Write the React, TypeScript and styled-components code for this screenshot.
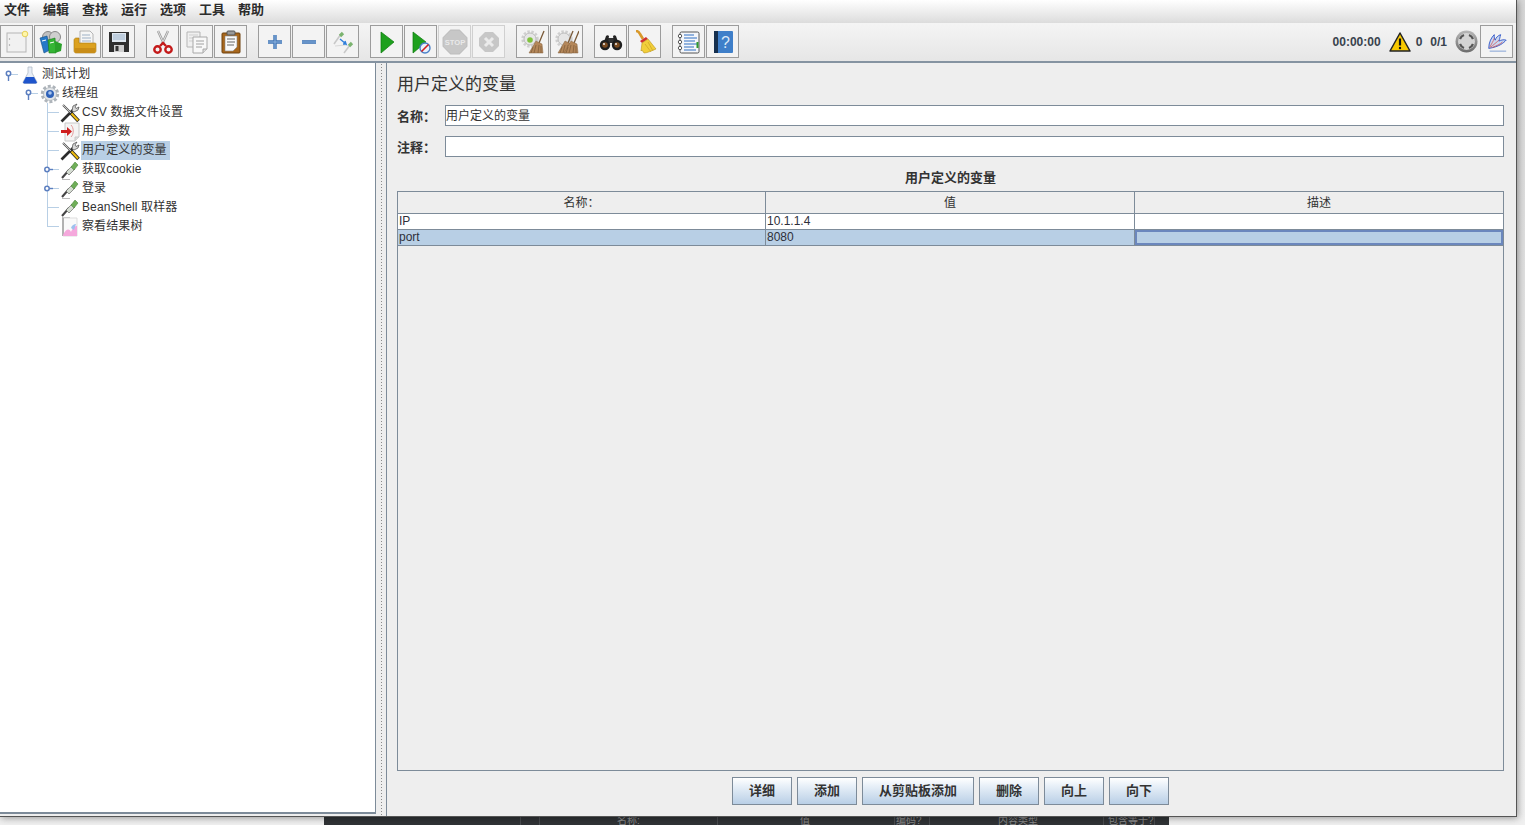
import React from "react";
import styled, { createGlobalStyle } from "styled-components";

const CJK = `"Liberation Sans", "Noto Sans CJK SC", sans-serif`;
const LINE = "#7d8b99";
const SEL = "#b8cfe5";

const Global = createGlobalStyle`
  html, body { margin: 0; padding: 0; background: #f1f1f1; overflow: hidden; }
  body { font-family: ${CJK}; font-size: 12px; color: #333; }
`;

const Page = styled.div`
  position: relative; width: 1525px; height: 825px; overflow: hidden;
  background: linear-gradient(#d8d8d8, #f0f0f0);
`;
const Window = styled.div`
  position: relative; z-index: 1;
  width: 1517px; height: 817px; box-sizing: border-box; display: flex; flex-direction: column;
  background: #eeeeee; border-right: 1px solid #555; border-bottom: 1px solid #555;
  box-shadow: 1px 1px 7px rgba(0,0,0,.38);
`;
const MenuBar = styled.div`
  height: 23px; flex: none; display: flex; align-items: flex-start; gap: 13px; padding: 0 0 0 4px;
  background: linear-gradient(#ffffff, #dcdcdc);
  border-bottom: 1px solid #f4f4f4;
`;
const MenuItem = styled.span`font-size: 13px; font-weight: 700; color: #2c2c2c; line-height: 19px;`;
const Toolbar = styled.div`
  height: 39px; flex: none; box-sizing: border-box; display: flex; align-items: flex-start; padding: 1px 3px 0 0;
  background: linear-gradient(#f4f4f4, #e6e6e6);
  border-bottom: 2px solid #8593a1;
`;
const ToolGroup = styled.div<{ $gap: number }>`display: flex; gap: 1px; margin-left: ${p => p.$gap}px;`;
const ToolButton = styled.div<{ $off?: boolean }>`
  width: 33px; height: 33px; box-sizing: border-box; display: flex; align-items: center; justify-content: center;
  background: #f3f3f3;
  border: 1px solid ${p => (p.$off ? "#d0d0d0" : "#9c9c9c")};
  & > svg { opacity: ${p => (p.$off ? 0.42 : 1)}; }
`;
const StatusArea = styled.div`
  margin-left: auto; height: 33px; display: flex; align-items: center;
  font-size: 12px; font-weight: 700; color: #39434d;
`;
const StatusText = styled.span<{ $left: number }>`margin-left: ${p => p.$left}px;`;
const StatusIcon = styled.span<{ $left: number; $right?: number }>`
  display: flex; margin-left: ${p => p.$left}px; margin-right: ${p => p.$right ?? 0}px;
`;
const Split = styled.div`flex: 1; min-height: 0; display: flex;`;
const TreePane = styled.div`
  width: 376px; flex: none; box-sizing: border-box; background: #fff; padding-top: 2px;
  margin-bottom: 2px;
  border-right: 1px solid ${LINE}; border-bottom: 2px solid ${LINE};
`;
const TreeRowBox = styled.div<{ $level: number }>`
  height: 19px; display: flex; align-items: center; padding-left: ${p => p.$level * 20}px;
`;
const Gutter = styled.svg`width: 20px; height: 19px; flex: none;`;
const TreeIcon = styled.span`width: 20px; height: 19px; flex: none; display: flex; align-items: center; justify-content: center;`;
const TreeLabel = styled.span<{ $sel?: boolean }>`
  margin-left: 1px; padding: 0 3px 0 1px; height: 19px; line-height: 19px; font-size: 12px;
  color: #333; letter-spacing: 0.1px; white-space: nowrap;
  background: ${p => (p.$sel ? SEL : "transparent")};
`;
const Divider = styled.div`
  width: 11px; flex: none; box-sizing: border-box; border-right: 1px solid ${LINE};
  background-image: radial-gradient(circle, #8a8a8a 0.6px, transparent 0.8px);
  background-size: 3px 3px; background-position: 4px 0; background-repeat: repeat-y;
  background-color: #eee;
`;
const Editor = styled.div`
  flex: 1; min-width: 0; display: flex; flex-direction: column; padding: 11px 12px 11px 10px; background: #eee;
`;
const Title = styled.div`font-size: 17px; line-height: 21px; color: #333; height: 31px;`;
const FieldRow = styled.div`display: flex; align-items: center; height: 21px; margin-bottom: 10px;`;
const FieldLabel = styled.label`width: 48px; flex: none; font-size: 13px; font-weight: 700; color: #333;`;
const FieldBox = styled.div`
  flex: 1; height: 21px; box-sizing: border-box; background: #fff; line-height: 20px; padding-left: 0;
  font-size: 12px; color: #333;
  border: 1px solid ${LINE};
`;
const TableTitle = styled.div`
  text-align: center; font-size: 13px; font-weight: 700; color: #333; height: 24px; line-height: 21px;
`;
const TableFrame = styled.div`
  flex: 1; min-height: 0; background: #eee; border: 1px solid ${LINE};
`;
const GridRow = styled.div<{ $h: number; $bg: string }>`
  display: grid; grid-template-columns: 367px 369px 1fr; height: ${p => p.$h}px; box-sizing: border-box;
  background: ${p => p.$bg}; border-bottom: 1px solid ${LINE};
`;
const HeadCell = styled.div`
  text-align: center; line-height: 23px; font-size: 12px; color: #333;
  & + & { border-left: 1px solid ${LINE}; }
`;
const Cell = styled.div<{ $focus?: boolean }>`
  line-height: 15px; padding-left: 1px; font-size: 12px; color: #2f2f3a; overflow: hidden;
  & + & { border-left: 1px solid ${LINE}; }
  ${p => p.$focus ? "box-shadow: inset 0 0 0 2px #6b87bd;" : ""}
`;
const ButtonRow = styled.div`
  display: flex; justify-content: center; gap: 5px; margin-top: 6px; height: 28px; flex: none;
`;
const ActionButton = styled.div<{ $w: number }>`
  width: ${p => p.$w}px; height: 28px; box-sizing: border-box; text-align: center; line-height: 26px;
  font-size: 13px; font-weight: 700; color: #333;
  border: 1px solid ${LINE};
  background: linear-gradient(#ffffff 0%, #e8f0f8 30%, #b9cfe6 100%);
`;
const BackStrip = styled.div`
  position: absolute; left: 324px; top: 817px; width: 845px; height: 8px; overflow: hidden;
  background: #303336; color: #8b8b8b; font-size: 10px; line-height: 7px;
`;
const StripMark = styled.span<{ $x: number }>`position: absolute; top: 0; left: ${p => p.$x}px; white-space: nowrap;`;
const StripLine = styled.i<{ $x: number }>`position: absolute; top: 0; bottom: 0; width: 1px; background: #4a4d50; left: ${p => p.$x}px;`;

/* ---------- toolbar icons ---------- */
const S = ({ children, size = 24 }: { children: React.ReactNode; size?: number }) => (
  <svg width={size} height={size} viewBox="0 0 24 24">{children}</svg>
);
const NewIcon = () => <S>
  <rect x="2" y="3" width="19" height="19" fill="#f1f1f1" stroke="#b5b5b5" />
  <circle cx="4.500" cy="9" r=".7" fill="#999" /><circle cx="4.500" cy="15" r=".7" fill="#999" />
  <circle cx="20" cy="4" r="2.800" fill="#fff6a8" stroke="#e4cf5a" />
</S>;
const TemplatesIcon = () => <S>
  <circle cx="9" cy="7" r="5.500" fill="#c0c0c0" stroke="#888" /><circle cx="16" cy="7" r="5.500" fill="#cfcfcf" stroke="#888" />
  <path d="M1 8l7-2 3 14-6 3z" fill="#2479c8" stroke="#154f8a" strokeWidth=".6" />
  <path d="M9 10l7-2 1 15-7 0z" fill="#35b535" stroke="#1c7a1c" strokeWidth=".6" />
  <path d="M16 11l7 3-1 7-6 2z" fill="#2aa12a" />
  <path d="M3 11l4-1M11 13l4-1" stroke="#fff" />
</S>;
const OpenIcon = () => <S>
  <path d="M7 1h10l3 3v11H7z" fill="#f6f6f6" stroke="#999" strokeWidth=".7" />
  <path d="M9 5h8M9 8h9M9 11h9" stroke="#9db0c5" />
  <path d="M3 8h3v5h16c1 0 1 1 1 1v7c0 1-1 2-2 2H3c-1 0-2-1-2-2V10c0-1 1-2 2-2z" fill="#dca11f" stroke="#a87a13" strokeWidth=".6" />
  <path d="M2 18h20v4c0 .5-.5 1-1 1H3c-.5 0-1-.5-1-1z" fill="#c98d17" />
</S>;
const SaveIcon = () => <S>
  <path d="M2 2h20v20H2z" fill="#2f2f2f" />
  <rect x="5" y="3" width="14" height="9" fill="#dfe7ef" />
  <path d="M6 5h12M6 7h12M6 9h12" stroke="#9db4cc" />
  <rect x="7" y="15" width="10" height="7" fill="#cfcfcf" /><rect x="8.500" y="16" width="3" height="5" fill="#333" />
</S>;
const CutIcon = () => <S>
  <path d="M7 1l6 13M17 1l-6 13" stroke="#9a9a9a" strokeWidth="2.400" />
  <path d="M7 1l6 13M17 1l-6 13" stroke="#e6e6e6" strokeWidth=".9" />
  <circle cx="6.500" cy="19.500" r="3.200" fill="none" stroke="#c41a1a" strokeWidth="2.400" />
  <circle cx="17.500" cy="19.500" r="3.200" fill="none" stroke="#c41a1a" strokeWidth="2.400" />
  <path d="M9 16l3-3 3 3" fill="none" stroke="#c41a1a" strokeWidth="2.400" />
</S>;
const CopyIcon = () => <S>
  <path d="M2 2h13v15H2z" fill="#f0f0f0" stroke="#b5b5b5" />
  <path d="M4 5h9M4 8h9M4 11h9" stroke="#cfcfcf" />
  <path d="M8 7h14v12l-4 4H8z" fill="#f8f8f8" stroke="#a8a8a8" />
  <path d="M11 11h8M11 14h8M11 17h6" stroke="#a0a0a0" />
  <path d="M18 23v-4h4" fill="#ddd" stroke="#a8a8a8" />
</S>;
const PasteIcon = () => <S>
  <rect x="3" y="3" width="18" height="20" rx="1" fill="#a8671c" stroke="#6f4310" />
  <rect x="8" y="1" width="8" height="4" rx="1" fill="#9a9a9a" stroke="#555" />
  <path d="M6 6h12v11l-4 4H6z" fill="#fafafa" stroke="#888" strokeWidth=".6" />
  <path d="M8 9h8M8 12h8M8 15h7" stroke="#666" />
</S>;
const PlusIcon = () => <S><path d="M12 5v14M5 12h14" stroke="#3f74b5" strokeWidth="3.400" /><path d="M12 5v14M5 12h14" stroke="#8fb4df" strokeWidth="1" /></S>;
const MinusIcon = () => <S><path d="M5 12h14" stroke="#3f74b5" strokeWidth="3.600" /><path d="M5 12h14" stroke="#8fb4df" strokeWidth="1" /></S>;
const ToggleIcon = () => <S>
  <path d="M3 14l7-10" stroke="#c8c8c8" strokeWidth="1.600" /><path d="M9 6l3-3" stroke="#7bb36f" strokeWidth="3.200" />
  <path d="M13 23l6-8" stroke="#c8c8c8" strokeWidth="1.600" /><path d="M18 16l3-3" stroke="#7bb36f" strokeWidth="3.200" />
  <path d="M4 16l11-1" stroke="#d8d8d8" strokeWidth="1.200" /><path d="M9 9l6 5-1-3 1 3-3 0" fill="none" stroke="#2f7fdc" strokeWidth="1.400" />
</S>;
const PlayIcon = () => <S><path d="M6 2l13 10L6 23z" fill="#1ea01e" stroke="#0d7a0d" strokeWidth=".7" /></S>;
const PlayNoIcon = () => <S>
  <path d="M4 2l13 10L4 23z" fill="#1ea01e" stroke="#0d7a0d" strokeWidth=".7" />
  <circle cx="16" cy="18" r="5" fill="#e8f0fb" stroke="#4a80c8" strokeWidth="1.400" />
  <path d="M12.500 21.500l7-7" stroke="#d21f1f" strokeWidth="1.600" />
</S>;
const StopIcon = () => <S size={26}>
  <path d="M8 1h8l7 7v8l-7 7H8l-7-7V8z" fill="#8d8d8d" stroke="#777" />
  <text x="12" y="14.500" textAnchor="middle" fontFamily="Liberation Sans" fontWeight="700" fontSize="7" fill="#ddd">STOP</text>
</S>;
const ShutIcon = () => <S>
  <path d="M8 2h8l6 6v8l-6 6H8l-6-6V8z" fill="#8d8d8d" />
  <path d="M8 8l8 8M16 8l-8 8" stroke="#e2e2e2" strokeWidth="3" />
</S>;
const Broom = ({ x }: { x: number }) => <g transform={`translate(${x} 0)`}>
  <path d="M22 1l-5 12" stroke="#7a5a38" strokeWidth="1.300" />
  <path d="M14 11l6 3 1 9-14 0z" fill="#b4875a" stroke="#86623e" strokeWidth=".5" />
  <path d="M11 17l-2 6M14 15l-2 8M17 15l-1 8M19 16v7" stroke="#7d5a36" strokeWidth=".7" />
</g>;
const Gear = ({ cx = 9, cy = 9, r = 6 }: { cx?: number; cy?: number; r?: number }) => <g>
  <circle cx={cx} cy={cy} r={r + 1.400} fill="none" stroke="#cfcfcf" strokeWidth="2.600" strokeDasharray="2.400 1.600" />
  <circle cx={cx} cy={cy} r={r} fill="#e6e6e6" stroke="#bdbdbd" />
</g>;
const ClearIcon = () => <S>
  <Gear /><circle cx="9" cy="10" r="2.800" fill="#80c23d" /><Broom x={1} />
</S>;
const ClearAllIcon = () => <S>
  <Gear /><Broom x={-4} /><Broom x={2} />
</S>;
const BinocIcon = () => <S>
  <rect x="8" y="8" width="8" height="5" fill="#333" />
  <path d="M7 6c1-1 2-1 3 0l-1 6H5z" fill="#222" /><path d="M17 6c-1-1-2-1-3 0l1 6h4z" fill="#222" />
  <circle cx="6" cy="15" r="5.200" fill="#1e1e1e" /><circle cx="18" cy="15" r="5.200" fill="#1e1e1e" />
  <circle cx="6" cy="15" r="2.800" fill="#7a4a1f" /><circle cx="18" cy="15" r="2.800" fill="#7a4a1f" />
  <circle cx="5" cy="14" r="1" fill="#eee" /><circle cx="17" cy="14" r="1" fill="#eee" />
</S>;
const YellowBroom = () => <S>
  <path d="M3 1c2 0 3 1 4 3l3 5" stroke="#d8982a" strokeWidth="2.600" fill="none" />
  <path d="M7 11l6-4 2 2-6 4z" fill="#d12f2f" />
  <path d="M9 13l6-4 8 10c-5 2-9 4-12 4l-2-3-1 1z" fill="#f2cf3a" stroke="#b9921f" strokeWidth=".6" />
  <path d="M12 14l6 8M15 12l5 9" stroke="#c9a321" strokeWidth=".7" />
</S>;
const ListIcon = () => <S>
  <rect x="3" y="2" width="19" height="21" rx="1.500" fill="#f4f6fa" stroke="#444" strokeWidth=".9" />
  {[6, 12, 18].map(y => <circle key={y} cx="3" cy={y} r="1.700" fill="#fff" stroke="#333" strokeWidth=".8" />)}
  <path d="M7 5h10M7 8h13M7 11h11M7 14h13M7 17h10M7 20h12" stroke="#2f6fc2" strokeWidth="1.200" />
  <rect x="19.500" y="12" width="2" height="6" fill="#2f9a2f" />
</S>;
const HelpIcon = () => <S>
  <rect x="3" y="1" width="19" height="22" rx="1" fill="#3f7fc9" />
  <rect x="3" y="1" width="4" height="22" fill="#16304f" />
  <text x="14.500" y="18" textAnchor="middle" fontFamily="Liberation Sans" fontSize="16" fill="#dbe8f7">?</text>
</S>;
const WarnIcon = () => <svg width="22" height="20" viewBox="0 0 22 20">
  <path d="M11 1L21 19H1z" fill="#f7c800" stroke="#222" strokeWidth="1.500" strokeLinejoin="round" />
  <path d="M11 6.500v7" stroke="#111" strokeWidth="2.200" /><circle cx="11" cy="16" r="1.200" fill="#111" />
</svg>;
const CircleIcon = () => <svg width="23" height="23" viewBox="0 0 23 23">
  <defs><linearGradient id="ring" x1="0" y1="0" x2="0" y2="1"><stop offset="0" stopColor="#b8b8b8" /><stop offset="1" stopColor="#6c6c6c" /></linearGradient></defs>
  <circle cx="11.500" cy="11.500" r="11" fill="url(#ring)" />
  <circle cx="11.500" cy="11.500" r="8.500" fill="#d4d4d4" />
  <path d="M5 9a7 7 0 0 1 4-4M14 5a7 7 0 0 1 4 4M18 14a7 7 0 0 1-4 4M9 18a7 7 0 0 1-4-4" fill="none" stroke="#555" strokeWidth="2.200" />
</svg>;
const FeatherIcon = () => <S size={22}>
  <path d="M3 19c0-7 3-12 6-15 0 3 0 5 1 6 1-3 3-5 6-6-1 3-1 5-2 7 2-1 5-2 8-1-3 3-7 7-19 9z" fill="#c9d8f2" stroke="#2f55c8" strokeWidth="1" />
  <path d="M4 18c2-4 4-7 5-10M5 18c3-3 7-6 9-8M7 18c4-2 8-3 11-6" stroke="#d24b4b" strokeWidth=".8" fill="none" />
  <path d="M4 22h18" stroke="#9db4dc" strokeWidth="1.400" />
</S>;

/* ---------- tree icons ---------- */
const FlaskIcon = () => <svg width="18" height="18" viewBox="0 0 18 18">
  <path d="M7 1h4v6l5 9c0 1-1 1.500-1.500 1.500h-11C3 17.500 2 17 2 16l5-9z" fill="#e8eef6" stroke="#a9b5c2" strokeWidth=".7" />
  <path d="M5 11h8l3 5.500c0 .5-1 1-1.500 1h-11c-.5 0-1.500-.5-1.500-1z" fill="#1f55cc" />
</svg>;
const GroupIcon = () => <svg width="20" height="20" viewBox="0 0 20 20">
  <circle cx="10" cy="10" r="7.800" fill="none" stroke="#aeb4ba" strokeWidth="2.800" strokeDasharray="3 1.900" />
  <circle cx="10" cy="10" r="6.500" fill="#e2e5e8" stroke="#9aa2aa" strokeWidth=".6" />
  <circle cx="10" cy="10" r="4" fill="#2f62b8" /><circle cx="10" cy="9" r="1.800" fill="#a9c5ee" />
</svg>;
const WrenchIcon = () => <svg width="20" height="20" viewBox="0 0 20 20">
  <path d="M1.500 18.500L13 7" stroke="#2c2c2c" strokeWidth="2.600" />
  <path d="M12 8l1-5 4-2-2 3 1 1.500L19 4l-1 3-4 2z" fill="#d8d8d8" stroke="#444" strokeWidth=".7" />
  <path d="M3 2l8 8" stroke="#555" strokeWidth="2" /><path d="M3 2l8 8" stroke="#ddd" strokeWidth=".8" />
  <path d="M11 10l7.500 8" stroke="#222" strokeWidth="3.600" /><path d="M11.500 10.500l6.500 7" stroke="#eebb10" strokeWidth="2" />
</svg>;
const PreIcon = () => <svg width="20" height="20" viewBox="0 0 20 20">
  <path d="M5 1h14v14l-4 4H5z" fill="#f4f4f4" stroke="#c8c8c8" />
  <path d="M15 19v-4h4" fill="#ddd" stroke="#c8c8c8" />
  <path d="M1 8h6V5l5 4.500L7 14v-3H1z" fill="#cf1f1f" />
  <path d="M11 3c3 3 3 9 0 12" stroke="#e49a9a" fill="none" />
</svg>;
const PipetteIcon = () => <svg width="20" height="20" viewBox="0 0 20 20">
  <path d="M2 18l7-8" stroke="#444" strokeWidth="2" />
  <path d="M6 12l6-6 3 3-6 6z" fill="#d5dcd2" stroke="#555" strokeWidth=".6" />
  <path d="M11 7l4-5 3 3-4 5z" fill="#6fae58" stroke="#3f7a30" strokeWidth=".5" />
  <path d="M2 19.500h8" stroke="#bbb" />
</svg>;
const GraphIcon = () => <svg width="20" height="20" viewBox="0 0 20 20">
  <path d="M3 1h14v18H3z" fill="#fafafa" stroke="#ddd" />
  <path d="M3 1v18" stroke="#777" />
  <path d="M3 18c3-6 6-7 8-3 2-5 4-6 6-6v10H3z" fill="#f5a8dc" />
  <path d="M11 11c1-3 3-4 5-4l-2 6z" fill="#9dc0ee" />
</svg>;

const Handle = ({ stem = true, level2 = false, last = false, line = false }: { stem?: boolean; level2?: boolean; last?: boolean; line?: boolean }) => (
  <Gutter viewBox="0 0 20 19">
    {line && <path d={`M7.500 0V${last ? 10 : 19}M7.500 9.500H19`} stroke={SEL} fill="none" />}
    {stem && !level2 && <g>
      <path d="M8.500 10V16" stroke="#5c7fc0" strokeWidth="1.400" />
      <path d="M11 9.500H18" stroke={SEL} />
      <circle cx="8.500" cy="8.500" r="2.200" fill="#fff" stroke="#5c7fc0" strokeWidth="1.500" />
    </g>}
    {level2 && <g>
      <path d="M9 9.500H13" stroke="#5c7fc0" strokeWidth="1.400" />
      <path d="M13 9.500H19" stroke={SEL} />
      <circle cx="7" cy="9.500" r="2.200" fill="#fff" stroke="#5c7fc0" strokeWidth="1.500" />
    </g>}
  </Gutter>
);

const toolGroups: { gap: number; items: { key: string; icon: React.ReactNode; off?: boolean }[] }[] = [
  { gap: 0, items: [{ key: "new", icon: <NewIcon /> }, { key: "tpl", icon: <TemplatesIcon /> }, { key: "open", icon: <OpenIcon /> }, { key: "save", icon: <SaveIcon /> }] },
  { gap: 11, items: [{ key: "cut", icon: <CutIcon /> }, { key: "copy", icon: <CopyIcon /> }, { key: "paste", icon: <PasteIcon /> }] },
  { gap: 11, items: [{ key: "plus", icon: <PlusIcon /> }, { key: "minus", icon: <MinusIcon /> }, { key: "tog", icon: <ToggleIcon /> }] },
  { gap: 11, items: [{ key: "play", icon: <PlayIcon /> }, { key: "playno", icon: <PlayNoIcon /> }, { key: "stop", icon: <StopIcon />, off: true }, { key: "shut", icon: <ShutIcon />, off: true }] },
  { gap: 11, items: [{ key: "clr", icon: <ClearIcon /> }, { key: "clra", icon: <ClearAllIcon /> }] },
  { gap: 11, items: [{ key: "find", icon: <BinocIcon /> }, { key: "reset", icon: <YellowBroom /> }] },
  { gap: 11, items: [{ key: "list", icon: <ListIcon /> }, { key: "help", icon: <HelpIcon /> }] },
];

const treeRows = [
  { label: "测试计划", level: 0, icon: <FlaskIcon />, gutter: <Handle /> },
  { label: "线程组", level: 1, icon: <GroupIcon />, gutter: <Handle /> },
  { label: "CSV 数据文件设置", level: 2, icon: <WrenchIcon />, gutter: <Handle stem={false} line /> },
  { label: "用户参数", level: 2, icon: <PreIcon />, gutter: <Handle stem={false} line /> },
  { label: "用户定义的变量", level: 2, icon: <WrenchIcon />, gutter: <Handle stem={false} line />, sel: true },
  { label: "获取cookie", level: 2, icon: <PipetteIcon />, gutter: <Handle stem={false} line level2 /> },
  { label: "登录", level: 2, icon: <PipetteIcon />, gutter: <Handle stem={false} line level2 /> },
  { label: "BeanShell 取样器", level: 2, icon: <PipetteIcon />, gutter: <Handle stem={false} line /> },
  { label: "察看结果树", level: 2, icon: <GraphIcon />, gutter: <Handle stem={false} line last /> },
];

const menus = ["文件", "编辑", "查找", "运行", "选项", "工具", "帮助"];
const actions = [{ t: "详细", w: 60 }, { t: "添加", w: 60 }, { t: "从剪贴板添加", w: 112 }, { t: "删除", w: 60 }, { t: "向上", w: 60 }, { t: "向下", w: 60 }];

export default function App() {
  return (
    <Page>
      <Global />
      <Window>
        <MenuBar>{menus.map(m => <MenuItem key={m}>{m}</MenuItem>)}</MenuBar>
        <Toolbar>
          {toolGroups.map(g => (
            <ToolGroup key={g.items[0].key} $gap={g.gap}>
              {g.items.map(b => <ToolButton key={b.key} $off={b.off}>{b.icon}</ToolButton>)}
            </ToolGroup>
          ))}
          <StatusArea>
            <StatusText $left={0}>00:00:00</StatusText>
            <StatusIcon $left={8}><WarnIcon /></StatusIcon>
            <StatusText $left={5}>0</StatusText>
            <StatusText $left={8}>0/1</StatusText>
            <StatusIcon $left={8} $right={2}><CircleIcon /></StatusIcon>
            <ToolButton><FeatherIcon /></ToolButton>
          </StatusArea>
        </Toolbar>
        <Split>
          <TreePane>
            {treeRows.map(r => (
              <TreeRowBox key={r.label} $level={r.level}>
                {r.gutter}
                <TreeIcon>{r.icon}</TreeIcon>
                <TreeLabel $sel={r.sel}>{r.label}</TreeLabel>
              </TreeRowBox>
            ))}
          </TreePane>
          <Divider />
          <Editor>
            <Title>用户定义的变量</Title>
            <FieldRow><FieldLabel>名称：</FieldLabel><FieldBox>用户定义的变量</FieldBox></FieldRow>
            <FieldRow><FieldLabel>注释：</FieldLabel><FieldBox /></FieldRow>
            <TableTitle>用户定义的变量</TableTitle>
            <TableFrame>
              <GridRow $h={22} $bg="#eeeeee"><HeadCell>名称：</HeadCell><HeadCell>值</HeadCell><HeadCell>描述</HeadCell></GridRow>
              <GridRow $h={16} $bg="#ffffff"><Cell>IP</Cell><Cell>10.1.1.4</Cell><Cell /></GridRow>
              <GridRow $h={16} $bg={SEL}><Cell>port</Cell><Cell>8080</Cell><Cell $focus /></GridRow>
            </TableFrame>
            <ButtonRow>{actions.map(a => <ActionButton key={a.t} $w={a.w}>{a.t}</ActionButton>)}</ButtonRow>
          </Editor>
        </Split>
      </Window>
      <BackStrip>
        <StripLine $x={196} /><StripLine $x={215} /><StripLine $x={393} /><StripLine $x={570} /><StripLine $x={605} /><StripLine $x={779} /><StripLine $x={830} />
        <StripMark $x={293}>名称:</StripMark><StripMark $x={476}>值</StripMark><StripMark $x={572}>编码?</StripMark><StripMark $x={674}>内容类型</StripMark><StripMark $x={784}>包含等于?</StripMark>
      </BackStrip>
    </Page>
  );
}
